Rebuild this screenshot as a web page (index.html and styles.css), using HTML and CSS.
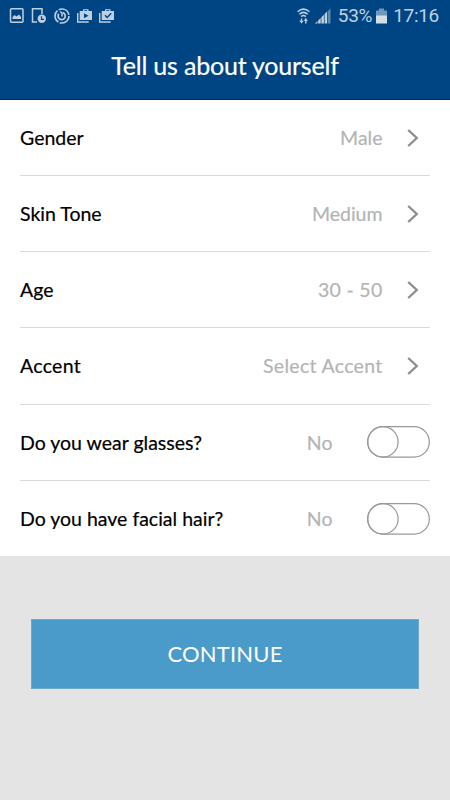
FILE: index.html
```html
<!DOCTYPE html>
<html lang="en">
<head>
    <meta charset="UTF-8">
    <meta name="viewport" content="width=device-width, initial-scale=1.0">
    <title>Tell us about yourself</title>
    <link rel="stylesheet" href="styles.css">
</head>
<body>
    <header>
        <div class="status">
            <div class="notices">
                <svg width="15" height="15" viewBox="0 0 15 15"><rect x="1.500" y=".8" width="12.500" height="13.400" rx="1" fill="none" stroke="#c0cfe0" stroke-width="1.5"/><path d="M3.500 11V9l2-2 2 1.500 2.500-2L12 9v2z" fill="#c0cfe0"/></svg>
                <svg width="15" height="15" viewBox="0 0 15 15"><path d="M6 14H1.500V.8h9.500V6" fill="none" stroke="#c0cfe0" stroke-width="1.500"/><circle cx="10.800" cy="10.800" r="4.200" fill="#c0cfe0"/><path d="M10.500 8.300v3h2.500" fill="none" stroke="#004583" stroke-width="1.200"/></svg>
                <svg width="16" height="16" viewBox="0 0 16 16"><g fill="none" stroke="#c0cfe0"><circle cx="8" cy="8" r="7" stroke-width="1.600" stroke-dasharray="13.200 1.460"/><path d="M4.800 5.800a3.600 3.600 0 1 0 4-1.200" stroke-width="1.700"/><path d="M6.300 3.700L8 5v3.500" stroke-width="1.500"/></g></svg>
                <svg width="15" height="15" viewBox="0 0 15 15"><path d="M.7 5v9h11" fill="none" stroke="#c0cfe0" stroke-width="1.400"/><path d="M2.700 3H6V1.200h5.500V3H15v9H2.700z" fill="#c0cfe0"/><path d="M7.200 2.200h3V3h-3zM7 5.200l4.500 2.500L7 10.200z" fill="#004583"/></svg>
                <svg width="15" height="15" viewBox="0 0 15 15"><path d="M.7 5v9h11" fill="none" stroke="#c0cfe0" stroke-width="1.400"/><path d="M2.700 3H6V1.200h5.500V3H15v9H2.700z" fill="#c0cfe0"/><path d="M7.200 2.200h3V3h-3z" fill="#004583"/><path d="M6 7.300l2.200 2.200L12.200 5.300" fill="none" stroke="#004583" stroke-width="1.400"/></svg>
            </div>
            <div class="phone">
                <svg width="13" height="16" viewBox="0 0 13 16"><g fill="none" stroke="#c0cfe0" stroke-width="1.500"><path d="M.6 3.700Q6.500-1.500 12.400 3.700M2.300 6.300Q6.500 2.400 10.700 6.300M4.200 8.600Q6.500 6.300 8.800 8.600"/><path d="M4.500 10.500v3M8.800 15.500v-3.500" stroke-width="1.400"/></g><path d="M2.300 12.700h4.400L4.500 15.500zM6.600 12.800H11L8.800 10z" fill="#c0cfe0"/></svg>
                <svg class="signal" width="16" height="16" viewBox="0 0 16 16"><path d="M0 15.500l2.500-2.500v2.500zM3.200 12.500l2.500-2.500v5.500H3.200zM6.400 9.300l2.500-2.500v8.700H6.400zM9.600 6.100l2.500-2.500v11.900H9.600z" fill="#c0cfe0"/><path d="M12.800 3.300L15.500.5v15h-2.700z" fill="#5c89b2"/></svg>
                <span>53%</span>
                <svg class="battery" width="11" height="16" viewBox="0 0 11 16"><path d="M0 2.500h3V.5h5v2h3V8H0z" fill="#7098bc"/><path d="M0 7.500h11V15.500H0z" fill="#d4dee9"/></svg>
                <span>17:16</span>
            </div>
        </div>
        <h1>Tell us about yourself</h1>
    </header>
    <ul class="options">
        <li>
            <span class="label">Gender</span><span class="value">Male</span>
            <svg class="arrow" width="12" height="18" viewBox="0 0 12 18"><path d="M1.200 1l8.600 8-8.600 8"/></svg>
        </li>
        <li>
            <span class="label">Skin Tone</span><span class="value">Medium</span>
            <svg class="arrow" width="12" height="18" viewBox="0 0 12 18"><path d="M1.200 1l8.600 8-8.600 8"/></svg>
        </li>
        <li>
            <span class="label">Age</span><span class="value wide">30 - 50</span>
            <svg class="arrow" width="12" height="18" viewBox="0 0 12 18"><path d="M1.200 1l8.600 8-8.600 8"/></svg>
        </li>
        <li>
            <span class="label wide">Accent</span><span class="value wide">Select Accent</span>
            <svg class="arrow" width="12" height="18" viewBox="0 0 12 18"><path d="M1.200 1l8.600 8-8.600 8"/></svg>
        </li>
        <li>
            <span class="label">Do you wear glasses?</span><span class="value">No</span>
            <svg class="switch" width="63" height="32" viewBox="0 0 63 32"><rect x=".7" y=".7" width="61.600" height="30.400" rx="15.200"/><circle cx="15.900" cy="15.900" r="15.200"/></svg>
        </li>
        <li>
            <span class="label">Do you have facial hair?</span><span class="value">No</span>
            <svg class="switch" width="63" height="32" viewBox="0 0 63 32"><rect x=".7" y=".7" width="61.600" height="30.400" rx="15.200"/><circle cx="15.900" cy="15.900" r="15.200"/></svg>
        </li>
    </ul>
    <button class="continue">CONTINUE</button>
</body>
</html>
```
FILE: styles.css
```css
* { margin: 0; padding: 0; box-sizing: border-box;}
body{width: 450px; height: 800px; background-color: #e4e4e4; font-family: Lato, "Liberation Sans", sans-serif; overflow: hidden;}
svg{display: block; flex: none;}

header{height: 100px; background-color: #004583; border-bottom: 1px solid #003070;}
.status{height: 31px; padding: 0 11px 0 9px; display: flex; justify-content: space-between; align-items: center; color: #c0cfe0; font-family: Roboto, sans-serif; font-size: 19px;}
.notices{display: flex; align-items: center; gap: 7.300px;}
.phone{display: flex; align-items: center; letter-spacing: -0.3px;}
.signal{margin: 0 7px 0 5px;}
.battery{margin: 0 6px 0 4px;}
header h1{color: #fff; font-size: 25px; font-weight: 400; line-height: 69px; letter-spacing: -0.2px; text-align: center; -webkit-text-stroke: 0.2px #fff;}

.options{height: 456px; padding: 0 20px; background-color: #fff; list-style: none; display: grid; grid-template-rows: repeat(3, 76px) repeat(2, 76.500px) 75px;}
.options li{border-bottom: 1px solid #dadada; display: flex; align-items: center; font-size: 19.500px; white-space: nowrap;}
.options li:last-child{border-bottom: none;}
.label{color: #000; margin-right: auto; -webkit-text-stroke: 0.2px #000;}
.value{color: #b4b4b4; -webkit-text-stroke: 0.2px #b4b4b4;}
.wide{letter-spacing: 0.3px;}
.arrow{margin: 0 11px 0 24.500px; fill: none; stroke: #8b8b8b; stroke-width: 2.200;}
.switch{margin-left: 34.500px; fill: none; stroke: #999; stroke-width: 1.200;}

.continue{display: block; width: 388px; height: 70px; margin: 63px 0 0 31px; padding-bottom: 2px; border: 1px solid #6aaad0; background-color: #4a9bca; color: #fff; font: 22px Lato, "Liberation Sans", sans-serif; letter-spacing: 0.2px;}
```
